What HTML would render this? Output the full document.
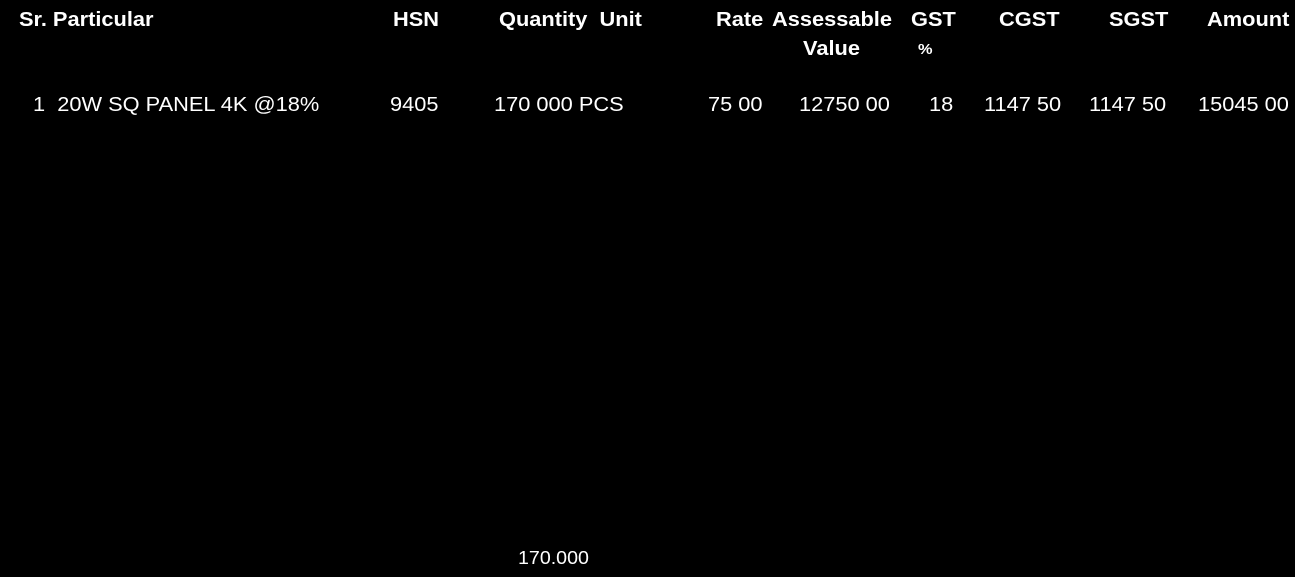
<!DOCTYPE html>
<html><head><meta charset="utf-8"><style>
html,body{margin:0;padding:0;background:#000;width:1295px;height:577px;overflow:hidden}
body{position:relative;font-family:"Liberation Sans",Arial,sans-serif;color:#fff}
.t{position:absolute;white-space:nowrap;line-height:1;transform:scaleX(1.09);transform-origin:0 0}
.h{font-weight:bold;font-size:20px}
.d{font-size:20px}
</style></head><body>
<div class="t h" style="left:19px;top:10px">Sr. Particular</div>
<div class="t h" style="left:393px;top:10px">HSN</div>
<div class="t h" style="left:499px;top:10px">Quantity&nbsp; Unit</div>
<div class="t h" style="left:716px;top:10px">Rate</div>
<div class="t h" style="left:772px;top:10px">Assessable</div>
<div class="t h" style="left:803px;top:39px">Value</div>
<div class="t h" style="left:918px;top:42px;font-size:15px">%</div>
<div class="t h" style="left:911px;top:10px">GST</div>
<div class="t h" style="left:999px;top:10px">CGST</div>
<div class="t h" style="left:1109px;top:10px">SGST</div>
<div class="t h" style="left:1207px;top:10px">Amount</div>

<div class="t d" style="left:33px;top:95px">1&nbsp; 20W SQ PANEL 4K @18%</div>
<div class="t d" style="left:390px;top:95px">9405</div>
<div class="t d" style="left:494px;top:95px">170 000 PCS</div>
<div class="t d" style="left:708px;top:95px">75 00</div>
<div class="t d" style="left:799px;top:95px">12750 00</div>
<div class="t d" style="left:929px;top:95px">18</div>
<div class="t d" style="left:984px;top:95px">1147 50</div>
<div class="t d" style="left:1089px;top:95px">1147 50</div>
<div class="t d" style="left:1198px;top:95px">15045 00</div>

<div class="t d" style="left:518px;top:549px;font-size:18px">170.000</div>
</body></html>
